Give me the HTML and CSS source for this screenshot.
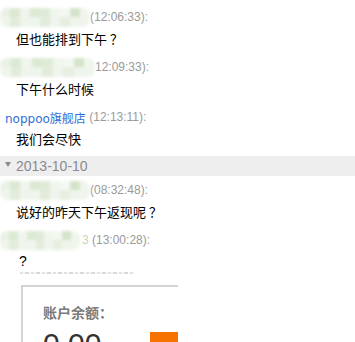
FILE: index.html
```html
<!DOCTYPE html>
<html lang="zh">
<head>
<meta charset="utf-8">
<link rel="stylesheet" href="styles.css">
</head>
<body>
<div class="chat">
  <div class="msg">
    <div class="head"><span class="mosaic w90"><i></i><i></i><i></i><i></i><i></i><i></i><i></i><i></i><i></i><i></i><i></i><i></i><i></i><i></i><i></i><i></i><i></i><i></i></span><span class="time">(12:06:33):</span></div>
    <div class="text">但也能排到下午<span class="fwq">？</span></div>
  </div>
  <div class="msg">
    <div class="head"><span class="mosaic w95"><i></i><i></i><i></i><i></i><i></i><i></i><i></i><i></i><i></i><i></i><i></i><i></i><i></i><i></i><i></i><i></i><i></i><i></i></span><span class="time">12:09:33):</span></div>
    <div class="text">下午什么时候</div>
  </div>
  <div class="msg">
    <div class="head seller"><span class="shop">noppoo旗舰店</span><span class="time">&nbsp;(12:13:11):</span></div>
    <div class="text">我们会尽快</div>
  </div>
  <div class="date"><span class="tri"></span>2013-10-10</div>
  <div class="msg after-date">
    <div class="head"><span class="mosaic w90"><i></i><i></i><i></i><i></i><i></i><i></i><i></i><i></i><i></i><i></i><i></i><i></i><i></i><i></i><i></i><i></i><i></i><i></i></span><span class="time">(08:32:48):</span></div>
    <div class="text">说好的昨天下午返现呢<span class="fwq">？</span></div>
  </div>
  <div class="msg">
    <div class="head"><span class="mosaic w82"><i></i><i></i><i></i><i></i><i></i><i></i><i></i><i></i><i></i><i></i><i></i><i></i><i></i><i></i><i></i><i></i><i></i><i></i></span><span class="time"><span class="hidden-char">3</span> (13:00:28):</span></div>
    <div class="text short">?</div>
    <div class="shot">
      <div class="cutline"></div>
      <div class="card">
        <div class="label">账户余额：</div>
        <div class="amount-row">
          <span class="amount">0.00</span>
          <span class="btn"></span>
        </div>
      </div>
    </div>
  </div>
</div>
</body>
</html>
```
FILE: styles.css
```css
html, body {
  margin: 0;
  padding: 0;
  background: #fff;
  overflow: hidden;
}
.chat {
  width: 355px;
  height: 342px;
  overflow: hidden;
  padding-top: 6px;
  box-sizing: border-box;
  font-family: "Liberation Sans", "Noto Sans CJK SC", sans-serif;
}
.msg {
  margin-bottom: 6px;
}
.after-date {
  margin-top: 3px;
}
.head {
  height: 22px;
  display: flex;
  align-items: center;
  font-size: 12px;
  white-space: nowrap;
}
.seller {
  padding-left: 5px;
}
.shop {
  color: #2f6fd6;
  font-family: "DejaVu Sans", "Noto Sans CJK SC", sans-serif;
}
.time {
  color: #9a9a9a;
}
.hidden-char {
  color: #c4d6bd;
}
.mosaic {
  display: grid;
  grid-template-columns: repeat(9, 1fr);
  grid-template-rows: 1fr 1fr;
  height: 19px;
  filter: blur(1.8px);
  border-radius: 7px;
  overflow: hidden;
  flex: none;
}
.w90 { width: 90px; }
.w95 { width: 95px; }
.w82 { width: 80px; margin-right: 2px; }
.mosaic i { background: #e9f1e5; }
.mosaic i:nth-child(2n) { background: #dbe9d2; }
.mosaic i:nth-child(3n) { background: #f0f5ed; }
.mosaic i:nth-child(5n) { background: #dfebd8; }
.mosaic i:nth-child(7n) { background: #f4f8f2; }
.mosaic i:nth-child(8) { background: #d4e4ca; }
.mosaic i:nth-child(n+10) { background: #eff5ec; }
.mosaic i:nth-child(11), .mosaic i:nth-child(14) { background: #e2ecdb; }
.mosaic i:nth-child(16) { background: #e6efe0; }
.text {
  height: 22px;
  line-height: 22px;
  padding-left: 16px;
  font-size: 13px;
  color: #000;
  white-space: nowrap;
  font-family: "Noto Sans CJK SC", "Liberation Sans", sans-serif;
}
.fwq {
  margin-left: 3px;
}
.text.short {
  height: 20px;
  line-height: 20px;
  padding-left: 19px;
  font-family: "Liberation Sans", sans-serif;
  font-size: 14px;
}
.date {
  height: 20px;
  background: #eeeeee;
  display: flex;
  align-items: center;
  font-size: 14px;
  color: #8a8a92;
  padding-left: 5px;
}
.tri {
  width: 0;
  height: 0;
  border-left: 3.5px solid transparent;
  border-right: 3.5px solid transparent;
  border-top: 5px solid #8a8a92;
  margin-right: 5px;
  margin-top: -3px;
}
.shot {
  margin-left: 18px;
  width: 160px;
  height: 80px;
  overflow: hidden;
}
.cutline {
  margin-top: 1px;
  margin-left: 2px;
  width: 114px;
  height: 2px;
  background: repeating-linear-gradient(90deg, #e2e2e2 0 3px, #f7f7f7 3px 5px, #d9d9d9 5px 9px, #fafafa 9px 11px);
}
.card {
  margin-top: 11px;
  margin-left: 3px;
  width: 220px;
  border-top: 2px solid #d3d3d3;
  border-left: 2px solid #d3d3d3;
  padding: 16px 0 0 20px;
}
.label {
  font-size: 14px;
  line-height: 20px;
  font-weight: bold;
  color: #7a7a7a;
}
.amount-row {
  display: grid;
  grid-template-columns: 107px 60px;
  margin-top: 6px;
  align-items: start;
}
.amount {
  font-size: 30px;
  line-height: 30px;
  color: #333;
}
.btn {
  display: block;
  height: 30px;
  margin-top: 3px;
  background: #f57200;
}
```
